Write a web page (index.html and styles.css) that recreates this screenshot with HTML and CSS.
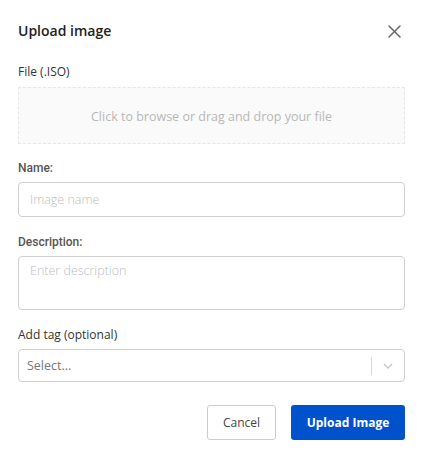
FILE: index.html
```html
<!DOCTYPE html>
<html>
<head>
<meta charset="utf-8">
<link rel="stylesheet" href="styles.css">
</head>
<body>
<div class="modal">
  <div class="header">
    <h1 class="title">Upload image</h1>
    <button class="close" aria-label="Close">
      <svg width="13" height="13" viewBox="0 0 13 13"><path d="M1 1L12 12M12 1L1 12" stroke="#666" stroke-width="1.5" stroke-linecap="round"/></svg>
    </button>
  </div>

  <div class="field first">
    <div class="label os">File (.ISO)</div>
    <div class="dropzone">Click to browse or drag and drop your file</div>
  </div>

  <div class="field">
    <div class="label rb">Name:</div>
    <div class="input"><span class="ph">Image name</span></div>
  </div>

  <div class="field desc">
    <div class="label rb">Description:</div>
    <div class="textarea"><span class="ph">Enter description</span></div>
  </div>

  <div class="field tag">
    <div class="label os">Add tag (optional)</div>
    <div class="select">
      <span class="sel-ph">Select...</span>
      <span class="sep"></span>
      <span class="chev">
        <svg width="10" height="6" viewBox="0 0 10 6"><path d="M1 1L5 5L9 1" fill="none" stroke="#c8c8c8" stroke-width="1.4"/></svg>
      </span>
    </div>
  </div>

  <div class="actions">
    <button class="btn cancel">Cancel</button>
    <button class="btn primary">Upload Image</button>
  </div>
</div>
</body>
</html>
```

FILE: styles.css
```css
* { box-sizing: border-box; }
html, body { margin: 0; padding: 0; background: #fff; }
body { font-family: "Open Sans", "Liberation Sans", sans-serif; color: #333; }

.modal { width: 428px; padding: 21px 23px 0 18px; }

.header { display: flex; justify-content: space-between; align-items: center; height: 20px; }
.title { margin: 0; font-size: 14px; font-weight: 600; line-height: 20px; color: #222; }
.close { border: 0; background: none; padding: 0; margin-right: 4px; width: 13px; height: 13px; display: flex; cursor: pointer; }

.field { margin-top: 16px; }
.field.first { margin-top: 23px; }
.field.desc { margin-top: 17px; }
.field.tag { margin-top: 17px; }

.label { font-size: 12px; line-height: 16px; color: #333; margin-bottom: 6px; }
.label.os { font-family: "Open Sans", sans-serif; }
.label.rb { font-family: Roboto, "Liberation Sans", sans-serif; font-weight: 500; color: #555; }
.first .label { margin-bottom: 7px; }

.dropzone {
  height: 57px; border: 1px dashed #e6e6e6; background: #fafafa;
  display: flex; align-items: center; justify-content: center;
  font-size: 12.5px; color: #b8b8b8; padding-top: 1px;
}

.input, .textarea, .select { border: 1px solid #cfcfcf; border-radius: 4px; background: #fff; }
.input { height: 35px; display: flex; align-items: center; padding: 0 11px; }
.textarea { height: 54px; padding: 1px 11px; }
.ph { font-size: 12.5px; color: #bdbdbd; font-weight: 300; }

.select { height: 33px; display: flex; align-items: center; padding-left: 8px; margin-top: 1px; }
.sel-ph { flex: 1; font-size: 12.5px; color: #777; }
.sep { width: 1px; height: 18px; background: #d6d6d6; }
.chev { width: 32px; display: flex; justify-content: center; align-items: center; }

.actions { display: flex; justify-content: flex-end; gap: 15px; margin-top: 23px; }
.btn { height: 35px; border-radius: 3px; font-family: "Open Sans", sans-serif; font-size: 12px; cursor: pointer; }
.cancel { width: 69px; background: #fff; border: 1px solid #cccccc; color: #444; }
.primary { width: 114px; background: #0052cc; border: 0; color: #fff; font-weight: 700; }
```
